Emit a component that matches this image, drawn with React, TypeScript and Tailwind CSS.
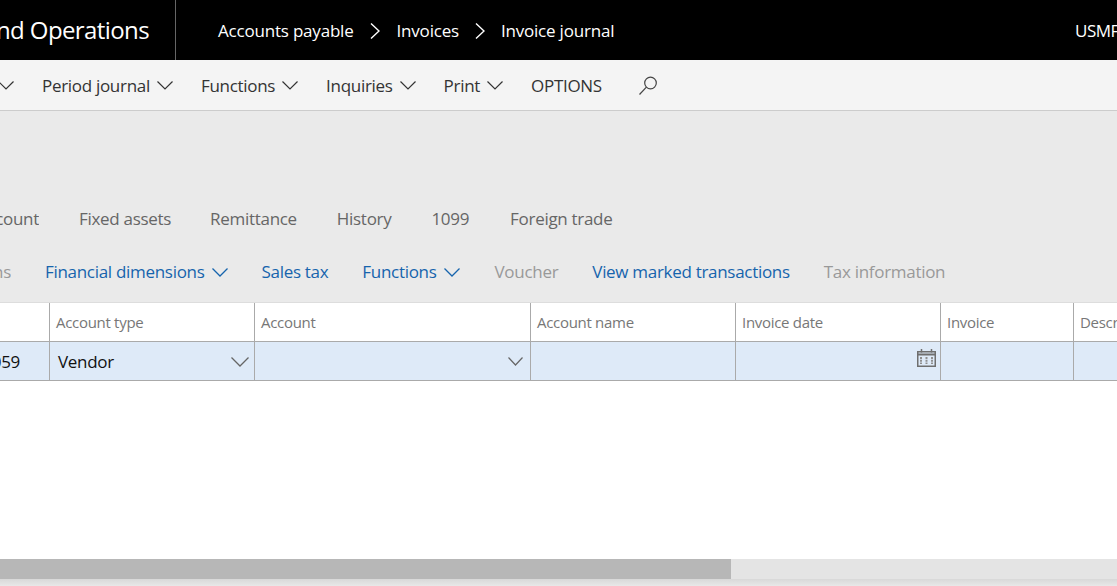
import React from 'react';

const font = "font-['Open_Sans','Noto_Sans',sans-serif]";

// wide flat chevron used across the bars
const Chevron = ({ w = 16, h = 9, sw = 1.2, color = 'currentColor', className = '' }: { w?: number; h?: number; sw?: number; color?: string; className?: string }) => (
  <svg width={w} height={h} viewBox={`0 0 ${w} ${h}`} fill="none" stroke={color} strokeWidth={sw} className={`shrink-0 ${className}`}>
    <path d={`M0.5 0.5 L${w / 2} ${h - 1} L${w - 0.5} 0.5`} />
  </svg>
);

const CrumbArrow = () => (
  <svg width="10" height="16" viewBox="0 0 10 16" fill="none" stroke="#fff" strokeWidth="1.4" className="shrink-0 mx-[16px]">
    <path d="M1 0.5 L9 8 L1 15.500" />
  </svg>
);

const Search = () => (
  <svg width="22" height="22" viewBox="0 0 22 22" fill="none" stroke="#444" strokeWidth="1.2">
    <circle cx="13.5" cy="8" r="5.8" />
    <path d="M9.4 12.2 2.5 19.5" />
  </svg>
);

const Calendar = () => (
  <svg width="19" height="18" viewBox="0 0 19 18" fill="none" stroke="#6f6f6f">
    <rect x="0.75" y="2.750" width="17.500" height="14.500" strokeWidth="1.500" />
    <path d="M0.5 5.500h18" strokeWidth="2" />
    <path d="M4.500 0v3.500M14.500 0v3.500" strokeWidth="1.500" />
    <path d="M4 8v7M9.500 8v7M15 8v7" strokeWidth="2" stroke="#8f8f8f" strokeDasharray="2 0.700" />
  </svg>
);

const gridCols = [
  { label: '', width: 'w-[50px]' },
  { label: 'Account type', width: 'w-[205px]' },
  { label: 'Account', width: 'w-[276px]' },
  { label: 'Account name', width: 'w-[205px]' },
  { label: 'Invoice date', width: 'w-[205px]' },
  { label: 'Invoice', width: 'w-[133px]' },
];

const MenuItem = ({ label }: { label: string }) => (
  <div className="flex items-center gap-[7px] mr-[28px]">
    <span>{label}</span>
    <Chevron />
  </div>
);

const ActionItem = ({ label, chevron, muted, className }: { label: string; chevron?: boolean; muted?: boolean; className: string }) => (
  <div className={`flex items-center gap-[7px] whitespace-nowrap ${muted ? 'text-[#999]' : 'text-[#1664ad]'} ${className}`}>
    <span>{label}</span>
    {chevron && <Chevron sw={1.3} />}
  </div>
);

export default function App() {
  return (
    <div className={`w-[1117px] h-[586px] overflow-hidden flex flex-col bg-white ${font}`}>
      {/* nav bar */}
      <div className="h-[60px] shrink-0 bg-black text-white flex items-center">
        <div className="w-[176px] h-full shrink-0 flex items-center justify-end overflow-hidden whitespace-nowrap pr-[26px] text-[24px] tracking-[-0.6px] border-r border-[#666]">
          Finance and Operations
        </div>
        <div className="flex items-center ml-[42px] pt-[1px] text-[17px] tracking-[-0.2px]">
          <span>Accounts payable</span>
          <CrumbArrow />
          <span className="ml-[1px]">Invoices</span>
          <CrumbArrow />
          <span>Invoice journal</span>
        </div>
        <div className="flex-1" />
        <div className="w-[42px] overflow-hidden pt-[2px] text-[17px] tracking-[-0.5px]">USMF</div>
      </div>

      {/* command bar */}
      <div className="h-[51px] shrink-0 bg-[#f4f4f4] border-b border-[#ccc] flex items-center pt-[1px] text-[17px] tracking-[-0.3px] text-[#333] whitespace-nowrap">
        <div className="w-[42px] shrink-0 overflow-hidden flex justify-end pr-[28px]">
          <Chevron />
        </div>
        <MenuItem label="Period journal" />
        <MenuItem label="Functions" />
        <MenuItem label="Inquiries" />
        <MenuItem label="Print" />
        <span className="mr-[35px]">OPTIONS</span>
        <Search />
      </div>

      {/* action pane */}
      <div className="h-[191px] shrink-0 bg-[#eaeaea] flex flex-col whitespace-nowrap text-[17px] tracking-[-0.3px]">
        <div className="mt-[94px] h-[28px] flex items-center text-[#666]">
          <div className="w-[39px] shrink-0 overflow-hidden flex justify-end"><span>Account</span></div>
          <span className="ml-[40px]">Fixed assets</span>
          <span className="ml-[39px]">Remittance</span>
          <span className="ml-[40px]">History</span>
          <span className="ml-[40px]">1099</span>
          <span className="ml-[41px]">Foreign trade</span>
        </div>
        <div className="mt-[25px] h-[28px] flex items-center">
          <div className="w-[11px] shrink-0 overflow-hidden flex justify-end text-[#999]"><span>Transactions</span></div>
          <ActionItem label="Financial dimensions" chevron className="ml-[34px]" />
          <ActionItem label="Sales tax" className="ml-[34px]" />
          <ActionItem label="Functions" chevron className="ml-[34px]" />
          <ActionItem label="Voucher" muted className="ml-[35px]" />
          <ActionItem label="View marked transactions" className="ml-[34px]" />
          <ActionItem label="Tax information" muted className="ml-[34px]" />
        </div>
      </div>

      {/* grid */}
      <div className="flex h-[39px] shrink-0 bg-white border-t border-[#ddd] text-[15px] tracking-[-0.3px] text-[#777] whitespace-nowrap">
        {gridCols.map((col, i) => (
          <div key={i} className={`${col.width} shrink-0 border-r border-[#aaa] pl-[6px] flex items-center`}>{col.label}</div>
        ))}
        <div className="flex-1 overflow-hidden pl-[6px] flex items-center">Description</div>
      </div>
      <div className="flex h-[40px] shrink-0 bg-[#deeaf8] border-y border-[#aaa] text-[17px] tracking-[-0.3px] text-[#111] whitespace-nowrap">
        <div className="w-[50px] shrink-0 border-r border-[#aaa] overflow-hidden flex items-center justify-end pt-[1px] pr-[29px]"><span>100059</span></div>
        <div className="w-[205px] shrink-0 border-r border-[#aaa] pl-[8px] pr-[5px] pt-[1px] flex items-center justify-between">
          <span>Vendor</span>
          <Chevron w={18} h={10} sw={1.3} color="#666" />
        </div>
        <div className="w-[276px] shrink-0 border-r border-[#aaa] pr-[7px] pt-[1px] flex items-center justify-end">
          <Chevron w={15} h={9} sw={1.2} color="#666" />
        </div>
        <div className="w-[205px] shrink-0 border-r border-[#aaa]" />
        <div className="w-[205px] shrink-0 border-r border-[#aaa] pr-[4px] flex justify-end pt-[7px]">
          <Calendar />
        </div>
        <div className="w-[133px] shrink-0 border-r border-[#aaa]" />
        <div className="flex-1" />
      </div>

      <div className="flex-1" />

      {/* scrollbar */}
      <div className="h-[20px] shrink-0 bg-[#e4e4e4] flex">
        <div className="w-[731px] bg-[#b7b7b7]" />
      </div>
      <div className="h-[7px] shrink-0 bg-gradient-to-b from-[#d8d8d8] to-[#e8e8e8]" />
    </div>
  );
}
